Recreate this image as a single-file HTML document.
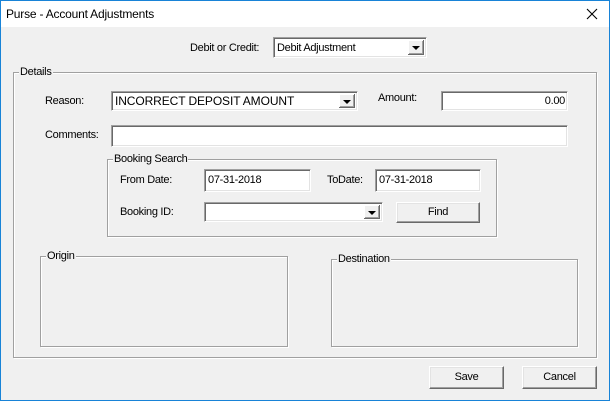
<!DOCTYPE html>
<html><head><style>
*{margin:0;padding:0;box-sizing:border-box}
body{width:610px;height:401px;background:#f0f0f0;font-family:"Liberation Sans",Arial,sans-serif;font-size:11px;letter-spacing:-0.3px;color:#000;position:relative;overflow:hidden}
.win{position:absolute;left:0;top:0;width:610px;height:401px;border:1px solid #1883d7}
.title{position:absolute;left:1px;top:1px;width:608px;height:26px;background:#fff}
.a{position:absolute;white-space:nowrap;line-height:14px}
.grp{position:absolute;border:1px solid #a0a0a0;box-shadow:1px 1px 0 #fff,inset 1px 1px 0 #fff}
.grp span{position:absolute;top:-8px;left:5px;background:#f0f0f0;padding:0 1px;line-height:14px}
.in{position:absolute;background:#fff;border-top:1px solid #a0a0a0;border-left:1px solid #a0a0a0;border-right:1px solid #fff;border-bottom:1px solid #fff;box-shadow:inset 1px 1px 0 #696969,inset -1px -1px 0 #e3e3e3;padding:3px 0 0 3px;line-height:14px;white-space:nowrap}
.dd{position:absolute;right:2px;top:2px;bottom:2px;width:16px;background:#f0f0f0;border-right:1px solid #696969;border-bottom:1px solid #696969;box-shadow:inset 1px 1px 0 #fff,inset -1px -1px 0 #a0a0a0}
.dd:after{content:"";position:absolute;left:4px;top:6px;border-left:4px solid transparent;border-right:4px solid transparent;border-top:4px solid #000}
.btn{position:absolute;background:#f0f0f0;border-top:1px solid #fff;border-left:1px solid #fff;border-right:1px solid #696969;border-bottom:1px solid #696969;box-shadow:inset -1px -1px 0 #a0a0a0,inset 1px 1px 0 #e3e3e3;text-align:center;line-height:19px}
</style></head><body>
<div class="win"></div>
<div class="title"></div>
<div class="a" style="left:6px;top:7px;font-size:12px;letter-spacing:-0.2px">Purse - Account Adjustments</div>
<svg style="position:absolute;left:586px;top:8px" width="12" height="12"><path d="M1 1L11 11M11 1L1 11" stroke="#000" stroke-width="1.1"/></svg>

<div class="a" style="left:190px;top:41px">Debit or Credit:</div>
<div class="in" style="left:273px;top:37px;width:154px;height:21px">Debit Adjustment<div class="dd"></div></div>

<div class="grp" style="left:13px;top:72px;width:584px;height:286px"><span>Details</span></div>

<div class="a" style="left:45px;top:94px">Reason:</div>
<div class="in" style="left:111px;top:91px;width:247px;height:20px;padding-top:2px;font-size:12px;letter-spacing:-0.1px">INCORRECT DEPOSIT AMOUNT<div class="dd"></div></div>
<div class="a" style="left:378px;top:91px">Amount:</div>
<div class="in" style="left:441px;top:91px;width:127px;height:20px;padding:2px 2px 0 0;text-align:right">0.00</div>

<div class="a" style="left:45px;top:128px">Comments:</div>
<div class="in" style="left:111px;top:125px;width:457px;height:22px"></div>

<div class="grp" style="left:107px;top:159px;width:390px;height:78px"><span>Booking Search</span></div>
<div class="a" style="left:120px;top:173px">From Date:</div>
<div class="in" style="left:204px;top:169px;width:107px;height:23px">07-31-2018</div>
<div class="a" style="left:327px;top:173px">ToDate:</div>
<div class="in" style="left:375px;top:169px;width:106px;height:23px">07-31-2018</div>
<div class="a" style="left:120px;top:205px">Booking ID:</div>
<div class="in" style="left:204px;top:202px;width:179px;height:20px"><div class="dd"></div></div>
<div class="btn" style="left:396px;top:202px;width:84px;height:21px">Find</div>

<div class="grp" style="left:40px;top:256px;width:248px;height:91px"><span>Origin</span></div>
<div class="grp" style="left:331px;top:259px;width:247px;height:88px"><span>Destination</span></div>

<div class="btn" style="left:429px;top:366px;width:75px;height:23px;line-height:21px">Save</div>
<div class="btn" style="left:522px;top:366px;width:75px;height:23px;line-height:21px">Cancel</div>
</body></html>
